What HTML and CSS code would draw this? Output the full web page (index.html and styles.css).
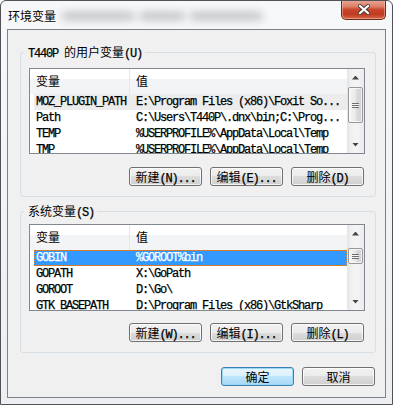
FILE: index.html
```html
<!DOCTYPE html>
<html lang="zh-CN">
<head>
  <meta charset="UTF-8">
  <title>环境变量</title>
  <link rel="stylesheet" href="styles.css">
</head>
<body>
<div class="window">
  <div class="titlebar">
    <span class="title">环境变量</span>
    <span class="haze"><i class="h1"></i><i class="h2"></i><i class="h3"></i></span>
    <button class="close" aria-label="关闭">
      <svg width="12" height="11" viewBox="0 0 12 11">
        <path d="M2 2 L10 9 M10 2 L2 9" stroke="#4a3a38" stroke-width="4" stroke-linecap="square"/>
        <path d="M2 2 L10 9 M10 2 L2 9" stroke="#fff" stroke-width="2.2" stroke-linecap="square"/>
      </svg>
    </button>
  </div>

  <div class="client">
    <fieldset class="group group-user">
      <legend><span class="mono">T440P </span>的用户变量<span class="mono">(U)</span></legend>
      <div class="listview">
        <div class="lv-main">
          <div class="lv-header"><span>变量</span><span>值</span></div>
          <div class="lv-rows">
            <div class="lv-row hot"><span>MOZ_PLUGIN_PATH</span><span>E:\Program Files (x86)\Foxit So...</span></div>
            <div class="lv-row"><span>Path</span><span>C:\Users\T440P\.dnx\bin;C:\Prog...</span></div>
            <div class="lv-row"><span>TEMP</span><span>%USERPROFILE%\AppData\Local\Temp</span></div>
            <div class="lv-row"><span>TMP</span><span>%USERPROFILE%\AppData\Local\Temp</span></div>
          </div>
        </div>
        <div class="scrollbar">
          <span class="sb-btn"><i class="arrow up"></i></span>
          <span class="sb-track"><span class="sb-thumb thumb-user"><i class="grip"></i></span></span>
          <span class="sb-btn"><i class="arrow down"></i></span>
        </div>
      </div>
      <div class="buttons">
        <button class="btn">新建<span class="mono">(N)...</span></button>
        <button class="btn">编辑<span class="mono">(E)...</span></button>
        <button class="btn">删除<span class="mono">(D)</span></button>
      </div>
    </fieldset>

    <fieldset class="group group-system">
      <legend>系统变量<span class="mono">(S)</span></legend>
      <div class="listview tall">
        <div class="lv-main">
          <div class="lv-header"><span>变量</span><span>值</span></div>
          <div class="lv-rows">
            <div class="lv-row selected"><span>GOBIN</span><span>%GOROOT%bin</span></div>
            <div class="lv-row"><span>GOPATH</span><span>X:\GoPath</span></div>
            <div class="lv-row"><span>GOROOT</span><span>D:\Go\</span></div>
            <div class="lv-row"><span>GTK_BASEPATH</span><span>D:\Program Files (x86)\GtkSharp</span></div>
          </div>
        </div>
        <div class="scrollbar">
          <span class="sb-btn"><i class="arrow up"></i></span>
          <span class="sb-track"><span class="sb-thumb thumb-system"><i class="grip"></i></span></span>
          <span class="sb-btn"><i class="arrow down"></i></span>
        </div>
      </div>
      <div class="buttons">
        <button class="btn">新建<span class="mono">(W)...</span></button>
        <button class="btn">编辑<span class="mono">(I)...</span></button>
        <button class="btn">删除<span class="mono">(L)</span></button>
      </div>
    </fieldset>

    <div class="dialog-buttons">
      <button class="btn default">确定</button>
      <button class="btn">取消</button>
    </div>
  </div>
</div>
</body>
</html>
```

FILE: styles.css
```css
* {
  box-sizing: border-box;
}
body {
  margin: 0;
  background: #fff;
  font-family: "Noto Sans CJK SC", sans-serif;
  font-size: 12px;
  color: #000;
}
.mono {
  font-family: "Liberation Mono", "Noto Sans CJK SC", monospace;
  letter-spacing: -1.2px;
  -webkit-text-stroke: 0.25px currentColor;
}

/* window frame */
.window {
  width: 393px;
  height: 405px;
  border: 1px solid #4f5358;
  border-radius: 6px 6px 0 0;
  background: linear-gradient(#f7f8fa, #eceef1);
  padding: 0 6px 6px;
  display: flex;
  flex-direction: column;
  overflow: hidden;
}
.titlebar {
  height: 28px;
  flex: none;
  display: flex;
  align-items: flex-start;
}
.title {
  margin: 7px 0 0 1px;
  line-height: 16px;
  text-shadow: 0 0 6px #fff, 0 0 10px #fff;
}
.haze {
  flex: 1;
  display: flex;
  gap: 6px;
  margin: 11px 0 0 6px;
}
.haze i {
  height: 8px;
  background: #8a8a8a;
  filter: blur(4px);
  opacity: .5;
}
.haze .h1 { width: 72px; }
.haze .h2 { width: 44px; }
.haze .h3 { width: 72px; }
.close {
  width: 45px;
  height: 20px;
  margin-top: -1px;
  padding: 0;
  border: 1px solid #6a2a1e;
  border-top: none;
  border-radius: 0 0 5px 5px;
  background: linear-gradient(#e9a898 0%, #dc7e66 35%, #c9472d 50%, #c13a1f 75%, #d66a4d 100%);
  box-shadow: inset 0 0 0 1px rgba(255, 210, 195, .45);
  display: flex;
  align-items: center;
  justify-content: center;
}

/* client area */
.client {
  flex: 1;
  border: 1px solid #7d8188;
  background: #f0f0f0;
}
.group {
  min-width: 0;
  border: 1px solid #d5dfe5;
  border-radius: 3px;
  padding: 9px 10px 10px 8px;
}
.group-user {
  margin: 15px 9px 0 12px;
}
.group-system {
  margin: 7px 9px 0 12px;
  padding-top: 6px;
}
.group legend {
  height: 14px;
  line-height: 14px;
  padding: 0 3px 0 4px;
  margin-left: -5px;
}

/* list view */
.listview {
  height: 86px;
  display: flex;
  border: 1px solid #828790;
  background: #fff;
}
.listview.tall {
  height: 87px;
}
.lv-main {
  flex: 1;
  overflow: hidden;
}
.lv-header {
  height: 25px;
  display: grid;
  grid-template-columns: 100px 1fr;
  line-height: 24px;
  background: linear-gradient(#fff 0, #fff 38%, #f3f4f6 38%, #f3f4f6 100%);
}
.lv-header span {
  padding-left: 6px;
}
.lv-header span:first-child {
  border-right: 1px solid #e3e8ee;
}
.lv-rows {
  padding-left: 4px;
}
.lv-row {
  height: 16px;
  line-height: 16px;
  display: grid;
  grid-template-columns: 100px 1fr;
  white-space: nowrap;
  font-family: "Liberation Mono", monospace;
  letter-spacing: -1.2px;
  -webkit-text-stroke: 0.25px currentColor;
}
.lv-row span {
  padding-left: 2px;
  overflow: hidden;
}
.lv-row.hot {
  background: #ececec;
}
.lv-row.selected {
  background: #3399ff;
  color: #fff;
  outline: 1px dotted #d9823a;
  outline-offset: -1px;
}

/* scroll bar */
.scrollbar {
  width: 17px;
  display: flex;
  flex-direction: column;
  background: linear-gradient(to right, #e4e4e4, #f1f1f1 25%, #f4f4f4 60%, #ebebeb);
}
.sb-btn {
  height: 17px;
  flex: none;
  display: flex;
  align-items: center;
  justify-content: center;
}
.arrow {
  width: 7px;
  height: 4px;
  background: #464646;
}
.arrow.up {
  clip-path: polygon(50% 0, 100% 100%, 0 100%);
}
.arrow.down {
  clip-path: polygon(0 0, 100% 0, 50% 100%);
}
.sb-track {
  flex: 1;
}
.sb-thumb {
  display: flex;
  align-items: center;
  justify-content: center;
  margin: 1px 1px 0;
  border: 1px solid #979797;
  border-radius: 2px;
  background: linear-gradient(to right, #f6f6f6, #e9e9e9 50%, #dcdcdc 50%, #d2d2d2);
  box-shadow: inset 0 0 0 1px rgba(255, 255, 255, .7);
}
.thumb-user {
  height: 36px;
}
.thumb-system {
  height: 16px;
  margin-top: 6px;
}
.grip {
  width: 7px;
  height: 5px;
  background: repeating-linear-gradient(#707070 0 1px, #f4f4f4 1px 2px);
}

/* push buttons */
.buttons,
.dialog-buttons {
  display: flex;
  justify-content: flex-end;
  gap: 8px;
}
.buttons {
  margin: 13px 1px 0 0;
}
.group-system .buttons {
  margin-top: 12px;
}
.dialog-buttons {
  margin: 14px 10px 0 0;
}
.btn {
  width: 73px;
  height: 19px;
  padding: 0;
  border: 1px solid #707070;
  border-radius: 3px;
  background: linear-gradient(#f2f2f2 0%, #ebebeb 50%, #dddddd 50%, #cfcfcf 100%);
  box-shadow: inset 0 0 0 1px rgba(255, 255, 255, .75);
  font: 12px/17px "Noto Sans CJK SC", sans-serif;
  color: #000;
}
.btn.default {
  border-color: #3c7fb1;
  background: linear-gradient(#eaf6fd 0%, #d9f0fc 50%, #bee6fd 50%, #a7d9f5 100%);
  box-shadow: inset 0 0 0 1px #9ad7f7;
}
```
